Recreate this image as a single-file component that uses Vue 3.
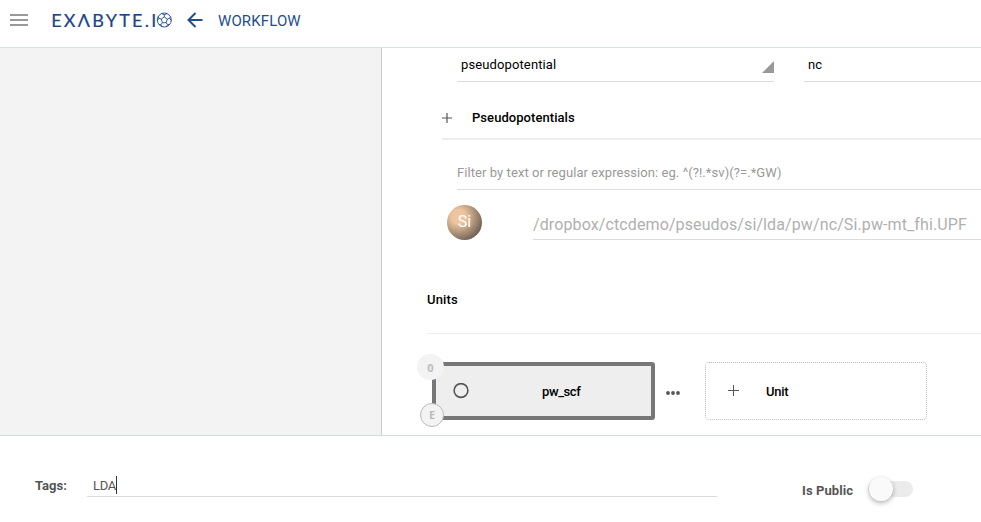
<script setup>
import { ref } from 'vue'

const tag = ref('LDA')
const isPublic = ref(false)
const fields = [
  { value: 'pseudopotential', wide: true },
  { value: 'nc', wide: false },
]
const dots = [2, 7, 12]
</script>

<template>
  <div class="page">
    <header class="topbar">
      <svg class="menu" width="18" height="12" viewBox="0 0 18 12"><path d="M0 1h18M0 6h18M0 11h18" /></svg>
      <svg class="logo" width="121" height="20" viewBox="0 0 121 20">
        <text x="-.8" y="16.6" textLength="105" lengthAdjust="spacing">EXΛBYTE.I</text>
        <g class="ball">
          <circle cx="112.3" cy="10" r="7" />
          <path d="M112.3 6.9l3 2.2-1.1 3.6h-3.8l-1.1-3.6zM112.3 6.9V4.6M115.3 9.1l2.4-.8M114.2 12.7l1.5 2M110.4 12.7l-1.5 2M109.3 9.1l-2.4-.8M109.4 3.6l2.9 1 2.9-1M118.6 6.6l-.9 1.7 1.6 2.4M117.6 14.5l-1.9.2-1.4 2.1M107 14.5l1.9.2 1.4 2.1M106 6.6l.9 1.7-1.6 2.4" />
        </g>
      </svg>
      <svg class="back" width="16" height="16" viewBox="0 0 16 16"><path d="M15.5 8H1.5M8.5 1L1.5 8l7 7" /></svg>
      <span class="title">WORKFLOW</span>
    </header>

    <div class="middle">
      <aside class="side"></aside>
      <main class="content">
        <div class="fields">
          <div v-for="f in fields" :key="f.value" class="field" :class="{ select: f.wide }">
            <span>{{ f.value }}</span>
            <svg v-if="f.wide" width="12" height="12" viewBox="0 0 12 12"><path d="M12 0v12H0z" fill="#999" /></svg>
          </div>
        </div>
        <div class="section">
          <svg class="plus" width="10" height="10" viewBox="0 0 10 10"><path d="M0 5h10M5 0v10" /></svg>
          <span class="section-title">Pseudopotentials</span>
        </div>
        <div class="filter"><span>Filter by text or regular expression: eg. ^(?!.*sv)(?=.*GW)</span></div>
        <div class="pseudo">
          <div class="element">Si</div>
          <div class="path"><span>/dropbox/ctcdemo/pseudos/si/lda/pw/nc/Si.pw-mt_fhi.UPF</span></div>
        </div>
        <h2 class="units-title">Units</h2>
        <div class="units">
          <div class="unit">
            <span class="badge index">0</span>
            <span class="badge kind">E</span>
            <svg class="status" width="16" height="16" viewBox="0 0 16 16"><circle cx="8" cy="7.5" r="6.9" /></svg>
            <span class="unit-name">pw_scf</span>
          </div>
          <svg class="more" width="15" height="4" viewBox="0 0 15 4"><circle v-for="x in dots" :key="x" :cx="x" cy="2" r="1.9" /></svg>
          <div class="add">
            <svg class="plus" width="12" height="12" viewBox="0 0 12 12"><path d="M0 5.5h11M5.5 0v11" /></svg>
            <span>Unit</span>
          </div>
        </div>
      </main>
    </div>

    <footer class="bottom">
      <span class="label tags-label">Tags:</span>
      <div class="tags"><span>{{ tag }}</span><i class="caret"></i></div>
      <span class="label public-label">Is Public</span>
      <button class="toggle" :class="{ on: isPublic }" aria-label="Is Public" @click="isPublic = !isPublic"><i></i></button>
    </footer>
  </div>
</template>

<style>
body { background: #fff; overflow: hidden; }
</style>

<style scoped>
* { box-sizing: border-box; }
.page { width: 981px; height: 522px; display: flex; flex-direction: column; overflow: hidden; font: 500 13px/20px Roboto, sans-serif; color: #000; }
svg { display: block; flex: none; }
.topbar { height: 48px; flex: none; display: flex; align-items: flex-start; border-bottom: 1px solid #dadeea; }
.menu { margin: 14px 0 0 10px; fill: none; stroke: #999; stroke-width: 2; }
.logo { margin: 10px 0 0 24px; overflow: visible; }
.logo text { font: 400 18px Lato, sans-serif; fill: #1b4488; stroke: #1b4488; stroke-width: .2; }
.ball { fill: none; stroke: #1b4a8c; stroke-width: .9; }
.back { margin: 12px 0 0 14px; fill: none; stroke: #1f4e8f; stroke-width: 2; }
.title { margin: 11px 0 0 15px; font-size: 15px; font-weight: 400; letter-spacing: .12px; color: #1f4e8f; }
.middle { height: 387px; flex: none; display: flex; }
.side { width: 382px; flex: none; background: #f3f3f3; border-right: 1px solid #ccc; }
.content { flex: 1; min-width: 0; padding-left: 45px; overflow: hidden; }
.fields { height: 34px; display: flex; gap: 30px; padding-left: 30px; }
.field { flex: 1; display: flex; justify-content: space-between; padding: 7px 0 0 4px; border-bottom: 1px solid #dcdcdc; font-weight: 400; letter-spacing: .12px; }
.field.select { flex: 0 0 317px; }
.field svg { margin-top: 6px; }
.section { height: 58px; margin-left: 15px; display: flex; padding-top: 26px; border-bottom: 2px solid #eee; }
.plus { fill: none; stroke: #555; stroke-width: 1; }
.section .plus { margin-top: 5px; stroke-width: 1.2; }
.section-title { margin-left: 20px; letter-spacing: .06px; }
.filter { height: 50px; margin-left: 30px; padding-top: 23px; border-bottom: 1px solid #dcdcdc; font-weight: 400; letter-spacing: .07px; color: #999; }
.pseudo { display: flex; margin: 15px 0 0 20px; height: 35px; }
.element { width: 35px; height: 35px; flex: none; border-radius: 50%; background: radial-gradient(circle at 33% 33%, #f0c8a0 0%, #ecc49d 22%, #94806c 60%, #3c342c 100%); color: #fff; font-size: 16px; font-weight: 400; line-height: 33px; text-align: center; }
.path { flex: 1; margin-left: 51px; padding-top: 10px; border-bottom: 1px solid #dcdcdc; font-size: 16px; font-weight: 400; letter-spacing: .11px; color: #b0b0b0; white-space: nowrap; }
.units-title { margin: 49px 0 0; height: 45px; padding-top: 1px; border-bottom: 1px solid #eee; font: inherit; letter-spacing: .15px; }
.units { display: flex; margin: 28px 0 0 5px; height: 58px; }
.unit { position: relative; width: 223px; flex: none; display: flex; border: 4px solid #777; border-radius: 3px; background: #eee; }
.status { margin: 17px 0 0 17px; fill: none; stroke: #555; stroke-width: 1.6; }
.unit-name { margin: 16px 0 0 73px; letter-spacing: -.4px; }
.badge { position: absolute; display: flex; align-items: center; justify-content: center; border-radius: 50%; background: #f3f3f3; color: #bbb; font-size: 11px; line-height: 1; font-family: "Open Sans", sans-serif; font-weight: 700; }
.index { left: -19px; top: -12px; width: 27px; height: 26px; }
.kind { left: -16px; top: 37px; width: 24px; height: 24px; padding-bottom: 1px; border: 1px solid #bbb; }
.more { margin: 29px 0 0 11px; fill: #555; }
.add { width: 222px; margin-left: 24px; display: flex; border: 1px dotted #bbb; border-radius: 4px; }
.add .plus { margin: 22px 0 0 22px; }
.add span { margin: 19px 0 0 26px; letter-spacing: -.3px; }
.bottom { flex: 1; display: flex; border-top: 1px solid #d6dbe9; color: #555; }
.tags-label { margin: 40px 0 0 35px; width: 52px; }
.tags { width: 630px; height: 61px; padding: 40px 0 0 6px; display: flex; border-bottom: 1px solid #dcdcdc; font-weight: 400; letter-spacing: -.3px; }
.caret { width: 1px; height: 18px; background: #333; }
.public-label { margin: 45px 0 0 85px; width: 66px; letter-spacing: .1px; }
.toggle { position: relative; width: 45px; height: 16px; margin-top: 45px; padding: 0; border: 0; border-radius: 8px; background: #ebebeb; }
.toggle i { position: absolute; left: 1px; top: -4px; width: 24px; height: 24px; border-radius: 50%; background: #fafafa; box-shadow: 0 2px 5px rgba(0, 0, 0, .3); }
.toggle.on i { left: 21px; }
.label { font-weight: 700; }
</style>
